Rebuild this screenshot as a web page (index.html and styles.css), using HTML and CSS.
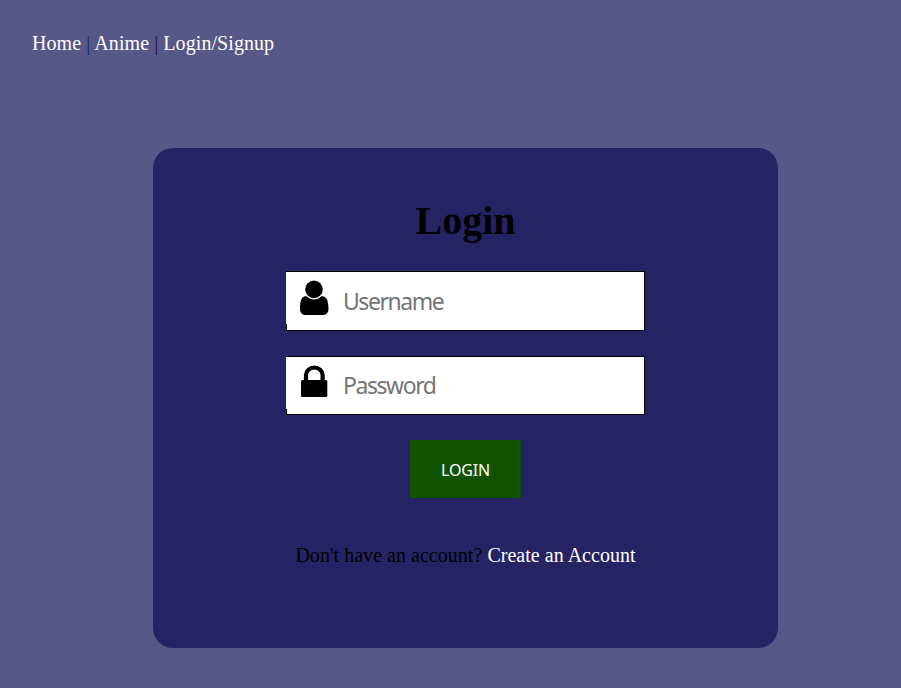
FILE: index.html
```html
<!DOCTYPE html>
<html lang="en">
<head>
<meta charset="utf-8">
<title>Login</title>
<link rel="stylesheet" href="styles.css">
</head>
<body>
<nav class="nav"><a href="#">Home</a> <span class="sep-blue">|</span> <a href="#">Anime</a> <span class="sep-dark">|</span> <a href="#">Login/Signup</a></nav>
<main class="card">
  <h1>Login</h1>
  <form class="form">
    <div class="field">
      <svg class="icon" viewBox="0 0 57 52"><circle cx="28" cy="17.4" r="8.800"/><path d="M20.500 24.200Q28 31 35.500 24.200C40.500 23.500 42.500 29 42.500 36.500C42.500 40.500 40.500 43 37 43H19.500C16 43 14 40.500 14 36.500C14 29 15.500 23.500 20.500 24.200Z"/></svg>
      <input type="text" placeholder="Username" aria-label="Username">
    </div>
    <div class="field field-password">
      <svg class="icon" viewBox="0 0 57 52"><path d="M20 24V18a8.300 7.500 0 0 1 16.600 0V24" fill="none" stroke="#000" stroke-width="4.200"/><rect x="15" y="23" width="26.300" height="17" rx="1.500"/></svg>
      <input type="password" placeholder="Password" aria-label="Password">
    </div>
    <button type="button">LOGIN</button>
  </form>
  <p class="signup">Don't have an account? <a href="#">Create an Account</a></p>
</main>
</body>
</html>
```
FILE: styles.css
```css
* { box-sizing: border-box; }
body {
  margin: 0;
  height: 688px;
  background: #575788;
  font-family: "Liberation Serif", serif;
  font-size: 20px;
  line-height: 23px;
  overflow: hidden;
}
a { color: #fff; text-decoration: none; }
.nav { padding: 32px 32px 0; height: 148px; white-space: nowrap; letter-spacing: 0.07px; }
.sep-blue { color: #14286c; }
.sep-dark { color: #280e38; }
.card {
  width: 625px;
  height: 500px;
  margin-left: 153px;
  padding-top: 50px;
  border-radius: 20px;
  background: #262365;
  text-align: center;
}
h1 { margin: 0; font-size: 40px; line-height: 46px; }
.form { display: flex; flex-direction: column; align-items: center; margin-top: 27px; }
.field {
  position: relative;
  width: 359px;
  height: 60px;
  margin-bottom: 25px;
  border: 1px solid #000;
  background: #fff;
}
.field-password { height: 59px; }
/* The icon panel covers the upper part of the left border. */
.icon {
  position: absolute;
  left: -1px;
  top: 0;
  width: 57px;
  height: 52px;
  background: #fff;
}
input {
  display: block;
  width: 100%;
  height: 100%;
  padding: 0 0 0 56px;
  border: 0;
  outline: 0;
  background: transparent;
  font-family: "Noto Sans", sans-serif;
  font-size: 23px;
  letter-spacing: -1.45px;
}
.field-password input { padding-bottom: 2px; }
input::placeholder { color: #757575; opacity: 1; }
button {
  width: 111px;
  height: 58px;
  padding: 2px 0 0;
  border: 0;
  background: #105200;
  color: #fff;
  font-family: "Noto Sans", sans-serif;
  font-size: 16px;
  letter-spacing: -0.2px;
}
.signup { margin: 46px 0 0; white-space: nowrap; letter-spacing: 0.03px; }
```
